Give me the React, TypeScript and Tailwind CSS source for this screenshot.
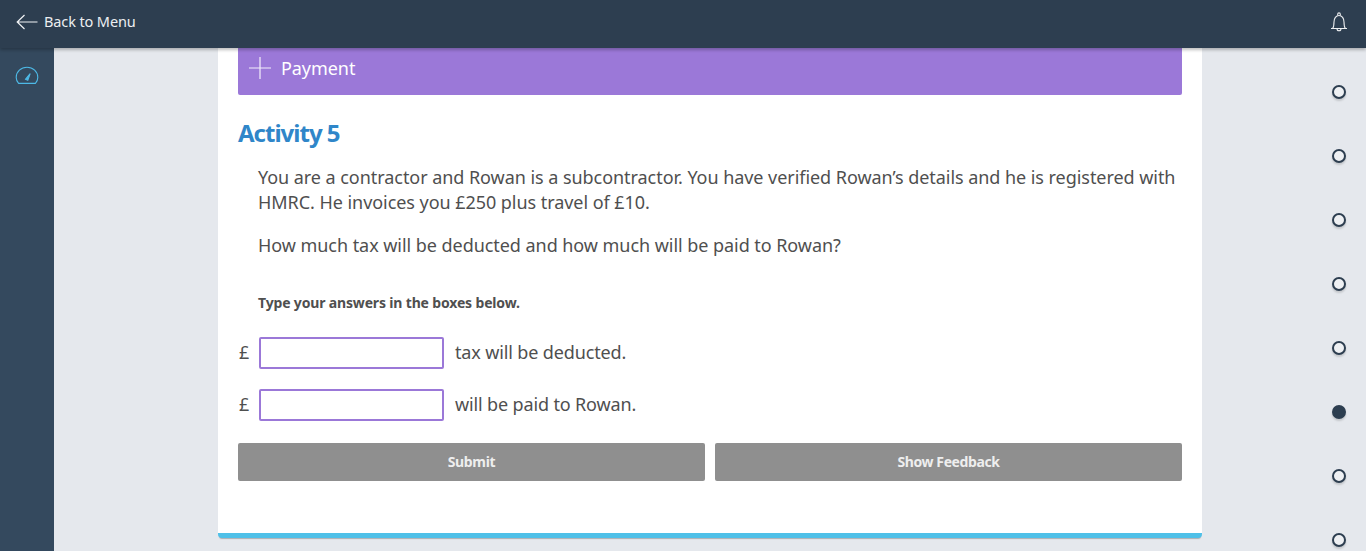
import React from "react";

const font = { fontFamily: '"Noto Sans", sans-serif' };

function Dot({ active }: { active?: boolean }) {
  return (
    <div
      className={
        active
          ? "w-[14px] h-[14px] rounded-full border-2 border-[#2d3e50] bg-[#2d3e50] shadow-[0_2px_2px_rgba(0,0,0,0.15)]"
          : "w-[14px] h-[14px] rounded-full border-2 border-[#2d3e50] bg-[#eef0f3] shadow-[0_2px_2px_rgba(0,0,0,0.15)]"
      }
    />
  );
}

function Row({ label }: { label: string }) {
  return (
    <div className="flex items-center h-8">
      <span className="w-[21px] pl-[1px] pb-[2px] text-[18px] text-[#4f4f4f] tracking-[-0.4px]">£</span>
      <input className="w-[185px] h-8 border-2 border-[#9b78d8] rounded-[2px] bg-white" />
      <span className="ml-[11px] pb-[2px] text-[18px] text-[#4f4f4f] tracking-[-0.14px]">{label}</span>
    </div>
  );
}

export default function App() {
  return (
    <div className="h-[551px] w-[1366px] overflow-hidden flex flex-col bg-[#e5e8ed]" style={font}>
      <header className="relative z-10 h-12 shrink-0 flex items-center justify-between bg-[#2d3e50] text-white shadow-[0_2px_3px_rgba(0,0,0,0.25)] pl-4 pr-[17px]">
        <div className="flex items-center gap-[6px]">
          <svg width="22" height="16" viewBox="0 0 22 16" fill="none" stroke="#f1f3f5" strokeWidth="1.2" className="mb-[5px]">
            <path d="M21.5 8H1M8.5 1L1.2 8l7.3 7" />
          </svg>
          <span className="pb-[4px] text-[14.5px] tracking-[-0.12px] text-[#eceef0]">Back to Menu</span>
        </div>
        <svg width="18" height="22" viewBox="0 0 18 22" fill="none" stroke="#eceef0" strokeWidth="1.1" className="mr-[1px] mb-[4px]">
          <path d="M1 17.5h16M2.6 17.5c1.2-1.5 1.4-3.4 1.4-6.5 0-3.5 2-6.5 5-6.5s5 3 5 6.5c0 3.1.2 5 1.4 6.5" />
          <path d="M7.7 4.6V3.2a1.3 1.3 0 0 1 2.6 0v1.4M7 17.8a2 2 0 0 0 4 0" />
        </svg>
      </header>
      <div className="flex flex-1 min-h-0">
        <aside className="w-[54px] shrink-0 bg-[#34495e] flex justify-center pt-[18px]">
          <svg width="24" height="19" viewBox="0 0 24 19" fill="none" stroke="#4db9e6" strokeWidth="1.1">
            <path d="M3.6 17.4C2 15.6 1.2 13.6 1.2 11.4 1.2 5.7 6 1.2 12 1.2s10.8 4.5 10.8 10.2c0 2.2-.8 4.2-2.4 6z" />
            <path d="M10.6 13.2l4.6-5.6-2.4 6.6z" fill="#4db9e6" />
          </svg>
        </aside>
        <main className="flex-1 flex min-w-0">
          <div className="ml-[164px] w-[984px] h-[490px] shrink-0 flex flex-col bg-white border-b-[5px] border-[#4fc0e8] rounded-b-[4px] px-5 shadow-[0_2px_1px_-1px_rgba(0,0,0,0.25)]">
            <div className="h-[47px] shrink-0 flex items-center gap-[10px] pl-[11px] bg-[#9b78d8] rounded-b-[2px] text-white">
              <svg width="22" height="22" viewBox="0 0 22 22" stroke="#f3eefb" strokeWidth="1.2" className="mb-[7px]">
                <path d="M11 0v22M0 11h22" />
              </svg>
              <span className="pb-[7px] text-[18px] leading-none tracking-[-0.06px]">Payment</span>
            </div>
            <h2 className="mt-[22px] h-8 text-[24px] leading-8 font-bold text-[#2f86c9] tracking-[-1px]">Activity 5</h2>
            <div className="pl-5 mt-[16px] text-[18px] leading-[25px] text-[#4f4f4f] tracking-[-0.05px]">
              <p>You are a contractor and Rowan is a subcontractor. You have verified Rowan’s details and he is registered with HMRC. He invoices you £250 plus travel of £10.</p>
              <p className="mt-[18px]">How much tax will be deducted and how much will be paid to Rowan?</p>
            </div>
            <p className="ml-5 mt-[35px] text-[14px] leading-5 font-bold text-[#4f4f4f] tracking-[-0.16px]">Type your answers in the boxes below.</p>
            <div className="mt-6 flex flex-col gap-5">
              <Row label="tax will be deducted." />
              <Row label="will be paid to Rowan." />
            </div>
            <div className="mt-[22px] flex gap-[10px]">
              <button className="flex-1 h-[38px] pb-[2px] bg-[#8f8f8f] rounded-[2px] text-[14px] font-bold text-[#eeeeee] tracking-[-0.35px]">Submit</button>
              <button className="flex-1 h-[38px] pb-[2px] bg-[#8f8f8f] rounded-[2px] text-[14px] font-bold text-[#eeeeee] tracking-[-0.4px]">Show Feedback</button>
            </div>
          </div>
          <div className="ml-[130px] w-[14px] shrink-0 flex flex-col gap-[50px] pt-[37px]">
            <Dot /><Dot /><Dot /><Dot /><Dot /><Dot active /><Dot /><Dot />
          </div>
        </main>
      </div>
    </div>
  );
}
